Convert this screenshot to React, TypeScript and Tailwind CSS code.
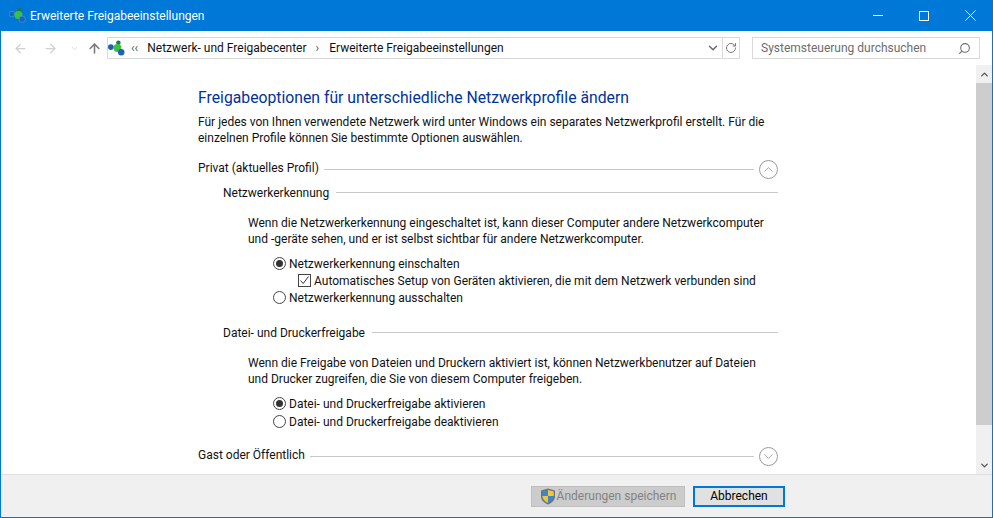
import { ArrowLeft, ArrowRight, ArrowUp, ChevronDown, ChevronUp, RotateCw, Search } from 'lucide-react';

function NetworkIcon({ size = 18, halo }: { size?: number; halo?: string }) {
  return (
    <svg width={size} height={size} viewBox="0 0 18 18">
      <line x1="4" y1="7" x2="9" y2="8" stroke="#7aa" strokeWidth="1" />
      <line x1="11" y1="4" x2="11" y2="13" stroke="#7aa" strokeWidth="1" />
      <circle cx="3" cy="7.5" r="3" fill="#1c62b8" stroke={halo} strokeWidth="0.8" />
      <circle cx="11" cy="3" r="2.4" fill="#1f7a4a" />
      <circle cx="10" cy="8.5" r="4.2" fill="#3fbf3f" />
      <circle cx="14" cy="13" r="3.4" fill="#1c62b8" stroke={halo} strokeWidth="0.8" />
    </svg>
  );
}

function Shield() {
  return (
    <svg width="16" height="17" viewBox="0 0 16 17">
      <path d="M8 0.5 L15 2.5 V8.5 C15 12.5 11.5 15 8 16.5 C4.5 15 1 12.5 1 8.5 V2.5 Z" fill="#6a7680" />
      <path d="M8 2 L13.7 3.6 V8 H8 Z" fill="#f3c63b" />
      <path d="M8 2 L2.3 3.6 V8 H8 Z" fill="#3f86c8" />
      <path d="M8 8 H2.3 C2.6 11.3 5.2 13.6 8 15 Z" fill="#f3c63b" />
      <path d="M8 8 H13.7 C13.4 11.3 10.8 13.6 8 15 Z" fill="#3f86c8" />
    </svg>
  );
}

function Radio({ checked, label }: { checked?: boolean; label: string }) {
  return (
    <div className="flex items-center h-[17px]">
      <span className="w-[13px] h-[13px] rounded-full border border-[#444] bg-white flex items-center justify-center mr-[3px]">
        {checked && <span className="w-[7px] h-[7px] rounded-full bg-[#333]" />}
      </span>
      <span>{label}</span>
    </div>
  );
}

function Heading({ label, toggle, indent }: { label: string; toggle?: 'up' | 'down'; indent?: boolean }) {
  return (
    <div className={`flex items-center ${indent ? 'pl-[25px]' : ''}`}>
      <span className={`whitespace-nowrap ${indent ? 'translate-y-px' : '-translate-y-[2px]'}`}>{label}</span>
      <span className={`flex-1 h-px bg-[#c8c8c8] ${indent ? 'ml-[7px]' : 'ml-[5px]'}`} />
      {toggle && (
        <span className="ml-[5px] w-[19px] h-[19px] rounded-full border border-[#9a9a9a] flex items-center justify-center text-[#8a8a8a]">
          {toggle === 'up' ? <ChevronUp size={15} strokeWidth={1.25} /> : <ChevronDown size={15} strokeWidth={1.25} />}
        </span>
      )}
    </div>
  );
}

export default function App() {
  return (
    <div
      className="w-[993px] h-[518px] border border-[#0078d7] border-t-0 flex flex-col bg-white text-[12px] leading-[16px] text-[#111] overflow-hidden whitespace-nowrap"
      style={{ fontFamily: 'Roboto, "Noto Sans", sans-serif' }}
    >
      {/* Title bar */}
      <div className="h-[31px] -mx-px bg-[#0078d7] text-white flex items-center shrink-0">
        <span className="ml-[9px] mr-[4px]">
          <NetworkIcon size={17} halo="#3c9be0" />
        </span>
        <span>Erweiterte Freigabeeinstellungen</span>
        <div className="ml-auto flex items-center">
          <span className="w-[46px] flex justify-center">
            <span className="w-[10px] h-px bg-white" />
          </span>
          <span className="w-[46px] flex justify-center">
            <span className="w-[10px] h-[10px] border border-white" />
          </span>
          <span className="w-[46px] flex justify-center">
            <svg width="11" height="11" viewBox="0 0 11 11" stroke="white" strokeWidth="1">
              <path d="M0.5 0.5 L10.5 10.5 M10.5 0.5 L0.5 10.5" />
            </svg>
          </span>
        </div>
      </div>

      {/* Address row */}
      <div className="h-[34px] flex items-center shrink-0">
        <ArrowLeft size={15} className="ml-[12px] text-[#d0d0d0]" />
        <ArrowRight size={15} className="ml-[15px] text-[#d0d0d0]" />
        <ChevronDown size={9} className="ml-[12px] text-[#d0d0d0]" />
        <ArrowUp size={15} strokeWidth={2.5} className="ml-[8px] text-[#7a7a7a]" />
        <div className="ml-[5px] w-[633px] h-[22px] border border-[#d9d9d9] flex items-center">
          <NetworkIcon size={17} />
          <span className="ml-[6px] text-[#555]">‹‹</span>
          <span className="ml-[9px]">Netzwerk- und Freigabecenter</span>
          <span className="ml-[9px] text-[#555]">›</span>
          <span className="ml-[10px]">Erweiterte Freigabeeinstellungen</span>
          <ChevronDown size={14} strokeWidth={2.5} className="ml-auto mr-[2px] text-[#6a6a6a]" />
          <span className="w-[17px] h-full border-l border-[#d9d9d9] flex items-center justify-center">
            <RotateCw size={12} strokeWidth={2} className="text-[#7a7a7a]" />
          </span>
        </div>
        <div className="ml-[12px] w-[228px] h-[22px] border border-[#d9d9d9] flex items-center px-[8px] text-[#6d6d6d]">
          <span>Systemsteuerung durchsuchen</span>
          <Search size={13} strokeWidth={2} className="ml-auto -scale-x-100 text-[#6d6d6d]" />
        </div>
      </div>

      {/* Content + scrollbar */}
      <div className="flex-1 flex min-h-0">
        <div className="flex-1 pl-[197px] pr-[198px] pt-[23px]">
          <h1 className="text-[15.75px] leading-[20px] text-[#003399]">Freigabeoptionen für unterschiedliche Netzwerkprofile ändern</h1>
          <p className="mt-[6px]">
            Für jedes von Ihnen verwendete Netzwerk wird unter Windows ein separates Netzwerkprofil erstellt. Für die
            <br />
            einzelnen Profile können Sie bestimmte Optionen auswählen.
          </p>
          <div className="mt-[14px] h-[20px]">
            <Heading label="Privat (aktuelles Profil)" toggle="up" />
          </div>
          <div className="mt-[4px]">
            <Heading label="Netzwerkerkennung" indent />
          </div>
          <div className="pl-[50px] mt-[15px]">
            <p>
              Wenn die Netzwerkerkennung eingeschaltet ist, kann dieser Computer andere Netzwerkcomputer
              <br />
              und -geräte sehen, und er ist selbst sichtbar für andere Netzwerkcomputer.
            </p>
            <div className="pl-[25px] mt-[8px]">
              <Radio checked label="Netzwerkerkennung einschalten" />
              <div className="flex items-center h-[17px] pl-[25px]">
                <span className="w-[13px] h-[13px] border border-[#444] mr-[3px] flex items-center justify-center">
                  <svg width="11" height="11" viewBox="0 0 11 11" fill="none" stroke="#333" strokeWidth="1">
                    <path d="M1.5 5.5 L4.2 8.5 L9.5 1.5" />
                  </svg>
                </span>
                <span>Automatisches Setup von Geräten aktivieren, die mit dem Netzwerk verbunden sind</span>
              </div>
              <Radio label="Netzwerkerkennung ausschalten" />
            </div>
          </div>
          <div className="mt-[18px]">
            <Heading label="Datei- und Druckerfreigabe" indent />
          </div>
          <div className="pl-[50px] mt-[15px]">
            <p>
              Wenn die Freigabe von Dateien und Druckern aktiviert ist, können Netzwerkbenutzer auf Dateien
              <br />
              und Drucker zugreifen, die Sie von diesem Computer freigeben.
            </p>
            <div className="pl-[25px] mt-[8px] flex flex-col gap-px">
              <Radio checked label="Datei- und Druckerfreigabe aktivieren" />
              <Radio label="Datei- und Druckerfreigabe deaktivieren" />
            </div>
          </div>
          <div className="mt-[17px] h-[20px]">
            <Heading label="Gast oder Öffentlich" toggle="down" />
          </div>
        </div>
        <div className="w-[16px] bg-[#f0f0f0] flex flex-col items-center shrink-0">
          <div className="h-[18px] flex items-center">
            <ChevronUp size={11} strokeWidth={3} className="text-[#555]" />
          </div>
          <div className="w-full h-[342px] bg-[#cdcdcd]" />
          <div className="mt-auto h-[17px] flex items-center">
            <ChevronDown size={11} strokeWidth={3} className="text-[#555]" />
          </div>
        </div>
      </div>

      {/* Footer */}
      <div className="h-[43px] shrink-0 bg-[#f0f0f0] border-t border-[#dfdfdf] flex items-center justify-end pr-[207px]">
        <button className="w-[154px] h-[21px] bg-[#cccccc] border border-[#bfbfbf] text-[#838383] flex items-center justify-center">
          <Shield />
          <span className="ml-[1px]">Änderungen speichern</span>
        </button>
        <button className="ml-[8px] w-[92px] h-[21px] bg-[#e1e1e1] border-2 border-[#0078d7] text-black">Abbrechen</button>
      </div>
    </div>
  );
}
